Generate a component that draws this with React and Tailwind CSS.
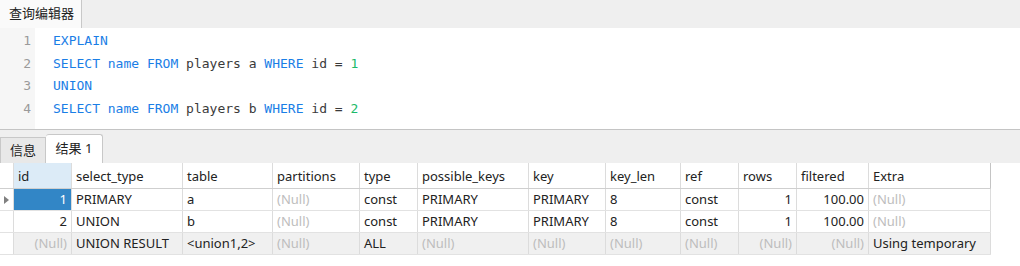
import React from "react";

const mono = { fontFamily: '"DejaVu Sans Mono", monospace' };

const K = ({ children }) => <span className="text-[#1a7ee6]">{children}</span>;
const N = ({ children }) => <span className="text-[#1cba6a]">{children}</span>;

const codeLines = [
  <><K>EXPLAIN</K></>,
  <><K>SELECT</K> <K>name</K> <K>FROM</K> players a <K>WHERE</K> id = <N>1</N></>,
  <><K>UNION</K></>,
  <><K>SELECT</K> <K>name</K> <K>FROM</K> players b <K>WHERE</K> id = <N>2</N></>,
];

const columns = [
  { name: "id", w: "w-[58px]", right: true },
  { name: "select_type", w: "w-[111px]" },
  { name: "table", w: "w-[90px]" },
  { name: "partitions", w: "w-[87px]" },
  { name: "type", w: "w-[58px]" },
  { name: "possible_keys", w: "w-[111px]" },
  { name: "key", w: "w-[77px]" },
  { name: "key_len", w: "w-[75px]" },
  { name: "ref", w: "w-[58px]" },
  { name: "rows", w: "w-[58px]", right: true },
  { name: "filtered", w: "w-[72px]", right: true },
  { name: "Extra", w: "w-[122px]" },
];

const NULL = null;
const rows = [
  ["1", "PRIMARY", "a", NULL, "const", "PRIMARY", "PRIMARY", "8", "const", "1", "100.00", NULL],
  ["2", "UNION", "b", NULL, "const", "PRIMARY", "PRIMARY", "8", "const", "1", "100.00", NULL],
  [NULL, "UNION RESULT", "<union1,2>", NULL, "ALL", NULL, NULL, NULL, NULL, NULL, NULL, "Using temporary"],
];

function Cell({ col, value, selected }) {
  const isNull = value === null;
  return (
    <div
      className={`${col.w} shrink-0 h-full flex items-center px-[4px] border-r border-[#dcdcdc] overflow-hidden whitespace-nowrap ${
        col.right ? "justify-end" : ""
      } ${selected ? "bg-[#3286c6] text-white" : ""} ${isNull && !selected ? "text-[#bdbdbd]" : ""}`}
    >
      {isNull ? "(Null)" : value}
    </div>
  );
}

export default function App() {
  return (
    <div className="w-[1020px] h-[266px] bg-white overflow-hidden text-[#222]" style={{ fontFamily: '"Noto Sans", "Noto Sans CJK SC", sans-serif' }}>
      {/* editor tab bar */}
      <div className="h-[28px] bg-[#efefef] flex">
        <div className="w-[82px] h-full bg-[#fafafa] border-r border-[#c8c8c8] flex items-center pl-[9px] text-[13px]">
          查询编辑器
        </div>
      </div>

      {/* editor */}
      <div className="h-[101px] flex bg-white">
        <div className="w-[35px] bg-[#f6f6f6] pt-[2px] text-[13px] text-[#9a9a9a] leading-[22.7px] text-right pr-[4px]" style={mono}>
          {codeLines.map((_, i) => (
            <div key={i}>{i + 1}</div>
          ))}
        </div>
        <div className="pl-[18px] pt-[2px] text-[13px] text-[#3a3a3a] leading-[22.7px] whitespace-pre" style={mono}>
          {codeLines.map((l, i) => (
            <div key={i}>{l}</div>
          ))}
        </div>
      </div>

      {/* results tab bar */}
      <div className="h-[34px] bg-[#efefef] border-t border-[#c4c4c4] flex items-end text-[13px]">
        <div className="w-[46px] h-[26px] bg-[#e8e8e8] border border-b-0 border-[#c8c8c8] flex items-center justify-center">
          信息
        </div>
        <div className="w-[57px] h-[29px] bg-white border border-b-0 border-l-0 border-[#c8c8c8] rounded-t-[3px] flex items-center justify-center">
          结果 1
        </div>
      </div>

      {/* grid */}
      <div className="text-[13px]">
        <div className="flex h-[26px] border-b border-[#cfcfcf] w-[991px]">
          <div className="w-[14px] shrink-0 border-r border-[#dcdcdc]" />
          {columns.map((c, i) => (
            <div
              key={c.name}
              className={`${c.w} shrink-0 h-full flex items-center pt-[2px] px-[4px] border-r ${i === 0 ? "bg-[#dcebf7]" : ""} ${
                i === columns.length - 1 ? "border-[#c4c4c4]" : "border-[#dcdcdc]"
              }`}
            >
              {c.name}
            </div>
          ))}
        </div>
        {rows.map((r, ri) => (
          <div key={ri} className={`flex h-[22px] border-b border-[#e2e2e2] w-[991px] ${ri === 2 ? "bg-[#f0f0f0]" : ""}`}>
            <div className="w-[14px] shrink-0 border-r border-[#dcdcdc] bg-white flex items-center pl-[4px]">
              {ri === 0 && (
                <svg width="5" height="8" viewBox="0 0 5 8">
                  <path d="M0 0 L5 4 L0 8 Z" fill="#808080" />
                </svg>
              )}
            </div>
            {columns.map((c, ci) => (
              <Cell key={c.name} col={c} value={r[ci]} selected={ri === 0 && ci === 0} />
            ))}
          </div>
        ))}
      </div>
    </div>
  );
}
